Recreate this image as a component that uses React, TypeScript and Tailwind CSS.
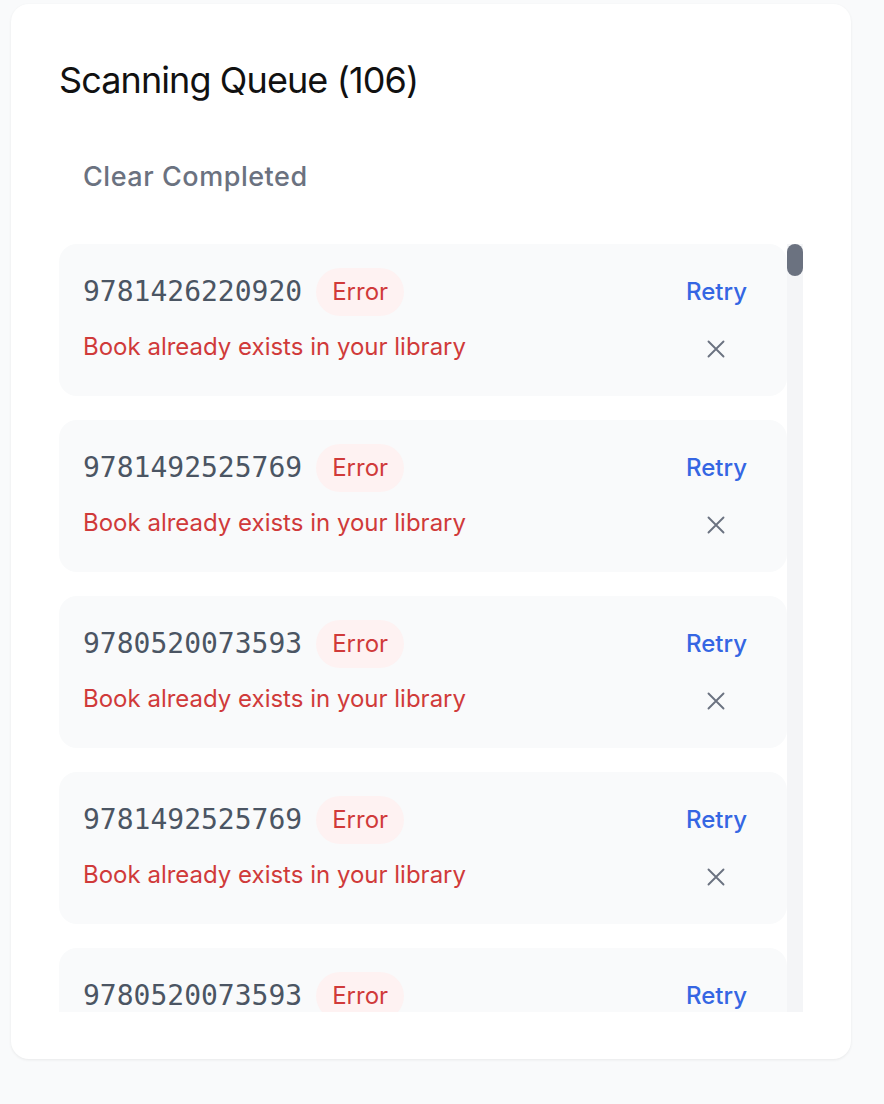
import React from "react";

type QueueItem = { isbn: string; message: string };

const TOTAL = 106;

const VISIBLE: QueueItem[] = [
  "9781426220920",
  "9781492525769",
  "9780520073593",
  "9781492525769",
  "9780520073593",
].map((isbn) => ({ isbn, message: "Book already exists in your library" }));

function XMarkIcon() {
  return (
    <svg viewBox="0 0 24 24" fill="none" stroke="currentColor" strokeWidth={1.5} className="h-[30px] w-[30px]">
      <path strokeLinecap="round" strokeLinejoin="round" d="M6 18 18 6M6 6l12 12" />
    </svg>
  );
}

function QueueRow({ item }: { item: QueueItem }) {
  return (
    <div className="flex shrink-0 items-start justify-between rounded-[18px] bg-[#f9fafb] p-[24px]">
      <div className="flex flex-col">
        <div className="flex items-center gap-[14px]">
          <span className="font-['DejaVu_Sans_Mono',monospace] text-[28px] leading-[40px] text-[#4b5563]">{item.isbn}</span>
          <span className="rounded-full bg-[#fef2f2] px-[16px] py-[6px] text-[24px] leading-[36px] text-[#d03a3a]">
            Error
          </span>
        </div>
        <p className="mt-[13px] text-[24px] leading-[36px] text-[#d03a3a]">{item.message}</p>
      </div>
      <div className="flex flex-col items-center gap-[10px]">
        <button type="button" className="pl-[18px] pr-[16px] py-[6px] text-[24px] font-medium leading-[36px] text-[#3566e3]">
          Retry
        </button>
        <button type="button" className="p-[8px] text-[#6b7280]" aria-label="Remove">
          <XMarkIcon />
        </button>
      </div>
    </div>
  );
}

export default function App() {
  return (
    <div className="min-h-screen bg-[#f9fafb] pl-[11px] pt-[4px] font-['Inter',sans-serif]">
      <div className="w-[840px] rounded-[18px] bg-white px-[48px] pb-[47px] pt-[52px] shadow-[0_1px_3px_rgba(0,0,0,0.07)]">
        <h2 className="text-[36px] font-normal leading-[48px] tracking-[-0.025em] text-[#111111]">Scanning Queue ({TOTAL})</h2>
        <button
          type="button"
          className="mt-[40px] px-[24px] py-[12px] text-[27px] font-medium leading-[42px] tracking-[0.02em] text-[#6b7280]"
        >
          Clear Completed
        </button>
        <div className="mt-[34px] flex h-[768px]">
          <div className="flex flex-1 flex-col gap-[24px] overflow-hidden">
            {VISIBLE.map((item, i) => (
              <QueueRow key={i} item={item} />
            ))}
          </div>
          {/* scrollbar */}
          <div className="w-[16px] bg-[#f4f5f7]">
            <div className="h-[32px] rounded-full bg-[#6b7280]" />
          </div>
        </div>
      </div>
    </div>
  );
}
